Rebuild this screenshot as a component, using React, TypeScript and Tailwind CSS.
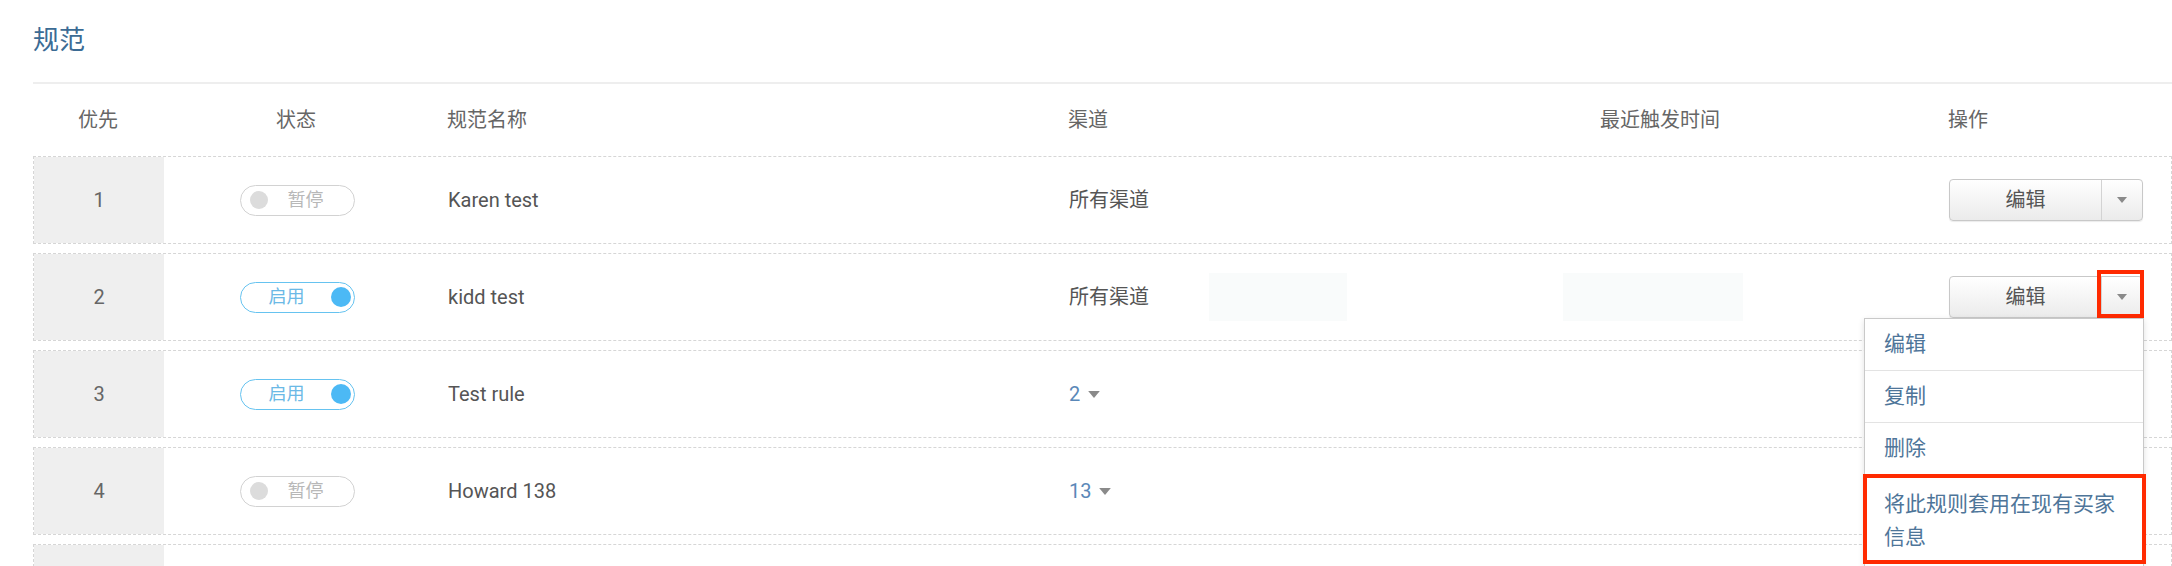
type Channel = { all: true } | { all: false; count: number };

interface Rule {
  priority: number;
  enabled: boolean;
  name: string;
  channel: Channel;
}

const rules: Rule[] = [
  { priority: 1, enabled: false, name: "Karen test", channel: { all: true } },
  { priority: 2, enabled: true, name: "kidd test", channel: { all: true } },
  { priority: 3, enabled: true, name: "Test rule", channel: { all: false, count: 2 } },
  { priority: 4, enabled: false, name: "Howard 138", channel: { all: false, count: 13 } },
];

const cols = "grid grid-cols-[130px_266px_639px_532px_348px_1fr]";

function Caret({ className = "" }: { className?: string }) {
  return (
    <svg viewBox="0 0 10 6" className={className}>
      <path d="M0 0h10L5 6z" fill="#8a8a8a" />
    </svg>
  );
}

function StatusToggle({ on }: { on: boolean }) {
  if (on) {
    return (
      <div className="flex h-[31px] w-[115px] items-center rounded-full border-[1.5px] border-[#66c3f0] pl-[28px] pr-[3px]">
        <span className="text-[18px] leading-none text-[#6bb9e6]">启用</span>
        <span className="ml-auto h-[20px] w-[20px] rounded-full bg-[#4cb9f5]" />
      </div>
    );
  }
  return (
    <div className="flex h-[31px] w-[115px] items-center rounded-full border-[1.5px] border-[#d2d2d2] pl-[9px]">
      <span className="h-[18px] w-[18px] rounded-full bg-[#dcdcdc]" />
      <span className="ml-[20px] text-[18px] leading-none text-[#b8b8b8]">暂停</span>
    </div>
  );
}

function ActionMenu() {
  const items = ["编辑", "复制", "删除"];
  return (
    <div className="absolute right-[-1px] top-full z-20 w-[280px] border border-[#c9c9c9] bg-white shadow-[0_2px_6px_rgba(0,0,0,0.12)]">
      {items.map((label) => (
        <div
          key={label}
          className="flex h-[52px] items-center border-b border-[#e3e3e3] pl-[19px] text-[21px] text-[#4e7599]"
        >
          {label}
        </div>
      ))}
      <div className="relative px-[19px] pb-[12px] pt-[13px] text-[21px] leading-[33px] text-[#4e7599]">
        将此规则套用在现有买家信息
        <span className="pointer-events-none absolute left-[-2px] right-[-3px] top-[-1px] bottom-[2px] border-4 border-[#ff2a00]" />
      </div>
    </div>
  );
}

function EditButton({ open }: { open?: boolean }) {
  return (
    <div className="relative w-[194px]">
      <div className="flex h-[42px] w-[194px] rounded-[4px] border border-[#c8c8c8] bg-linear-to-b from-white to-[#ebebeb] shadow-[0_1px_1px_rgba(0,0,0,0.08)]">
        <span className="flex flex-1 items-center justify-center text-[20px] text-[#555]">编辑</span>
        <span className="relative flex w-[41px] items-center justify-center border-l border-[#d3d3d3]">
          <Caret className="h-[6px] w-[10px]" />
          {open && (
            <span className="pointer-events-none absolute bottom-[-1px] left-[-5px] right-[-2px] top-[-7px] border-4 border-[#ff2a00]" />
          )}
        </span>
      </div>
      {open && <ActionMenu />}
    </div>
  );
}

function ChannelCell({ channel }: { channel: Channel }) {
  if (channel.all) return <span className="text-[20px] text-[#555]">所有渠道</span>;
  return (
    <span className="flex items-center gap-[8px] text-[20px] text-[#5a88b8]">
      {channel.count}
      <Caret className="h-[7px] w-[12px]" />
    </span>
  );
}

function RuleRow({ rule, open }: { rule: Rule; open?: boolean }) {
  return (
    <div
      className={`${cols} h-[88px] items-center border border-dashed border-[#d6d6d6] ${open ? "relative z-10" : ""}`}
    >
      <div className="flex self-stretch items-center justify-center bg-[#efefef] text-[20px] text-[#666]">
        {rule.priority}
      </div>
      <div className="flex justify-center">
        <StatusToggle on={rule.enabled} />
      </div>
      <div className="pl-[18px] text-[20px] text-[#555]">{rule.name}</div>
      <div className="flex items-center">
        <ChannelCell channel={rule.channel} />
        {open && <span className="ml-[60px] h-[48px] w-[138px] bg-[#f9fbfb]" />}
      </div>
      <div>{open && <span className="ml-[-38px] block h-[48px] w-[180px] bg-[#f9fbfb]" />}</div>
      <div>
        <EditButton open={open} />
      </div>
    </div>
  );
}

export default function App() {
  return (
    <div className="h-[566px] w-[2172px] overflow-hidden bg-white pl-[33px] font-['Roboto','Noto_Sans_CJK_SC',sans-serif]">
      <h1 className="pt-[24px] pb-[26px] text-[26px] font-normal leading-[32px] text-[#3b6b94]">规范</h1>
      <div className="border-t-2 border-[#eeeeee]">
        <div className={`${cols} h-[72px] items-center text-[20px] text-[#666]`}>
          <div className="text-center">优先</div>
          <div className="text-center">状态</div>
          <div className="pl-[18px]">规范名称</div>
          <div>渠道</div>
          <div>最近触发时间</div>
          <div>操作</div>
        </div>
        <div className="flex flex-col gap-[9px]">
          {rules.map((r) => (
            <RuleRow key={r.priority} rule={r} open={r.priority === 2} />
          ))}
          <div className={`${cols} h-[88px] border border-dashed border-[#d6d6d6]`}>
            <div className="bg-[#efefef]" />
          </div>
        </div>
      </div>
    </div>
  );
}
